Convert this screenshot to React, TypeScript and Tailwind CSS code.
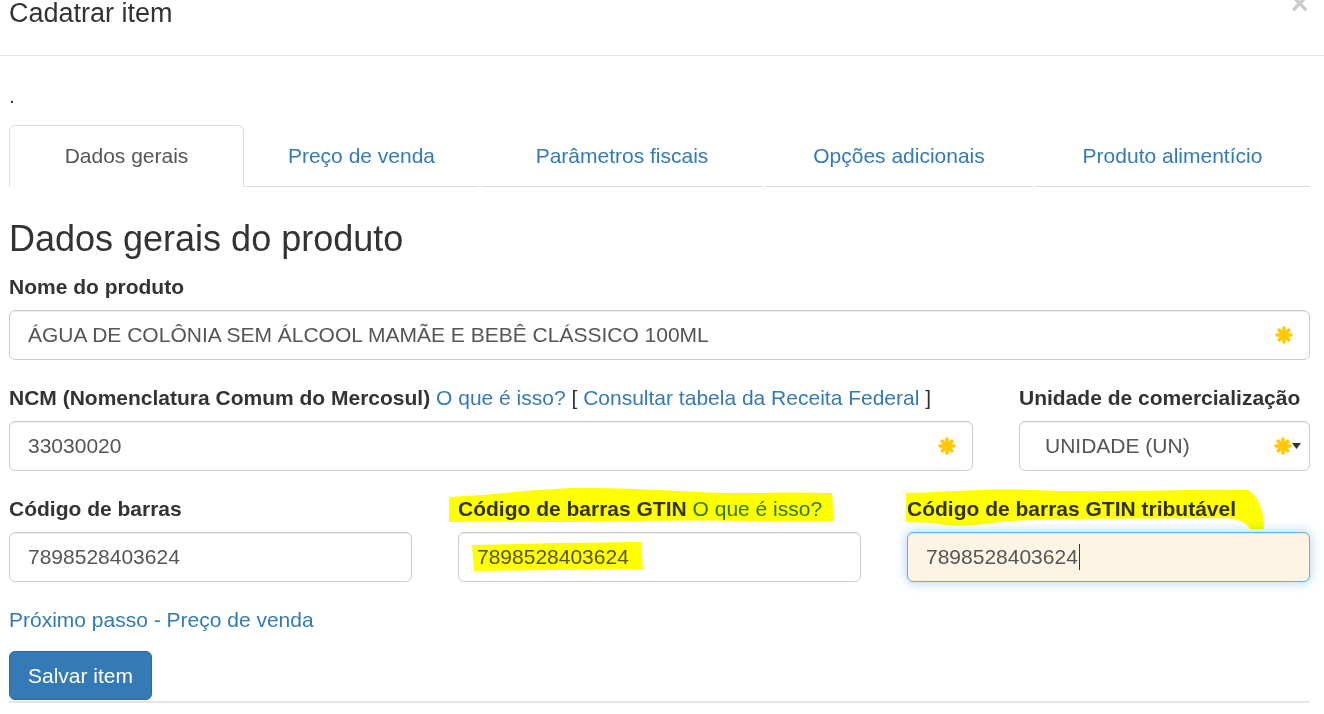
function Asterisk() {
  return (
    <svg width="18" height="18" viewBox="0 0 18 18" className="block">
      <g stroke="#ffc800" strokeWidth="3.6" strokeLinecap="round">
        <line x1="9" y1="2" x2="9" y2="16" />
        <line x1="2" y1="9" x2="16" y2="9" />
        <line x1="4.2" y1="4.2" x2="13.8" y2="13.8" />
        <line x1="13.8" y1="4.2" x2="4.2" y2="13.8" />
      </g>
    </svg>
  )
}

const label = "block font-bold text-[21px] leading-[30px] text-[#333] mb-[8px]"
const fieldBase = "relative flex items-center h-[50px] rounded-[6px] border px-[18px] text-[21px] text-[#555]"
const field = `${fieldBase} border-[#ccc] bg-white shadow-[inset_0_1px_1px_rgba(0,0,0,0.075)]`
const fieldFocus = `${fieldBase} border-[#66afe9] bg-[#fdf5e3] shadow-[inset_0_1px_1px_rgba(0,0,0,0.075),0_0_12px_rgba(102,175,233,0.6)]`

const tabs = [
  { name: "Preço de venda", w: "w-[235px]" },
  { name: "Parâmetros fiscais", w: "w-[282px] ml-[2px]" },
  { name: "Opções adicionais", w: "w-[268px] ml-[2px]" },
  { name: "Produto alimentício", w: "w-[275px] ml-[2px]" },
]

export default function App() {
  return (
    <div className="relative w-[1324px] h-[714px] overflow-hidden bg-white font-['Liberation_Sans',Arial,sans-serif] text-[#333]">
      {/* Header */}
      <div className="flex items-start justify-between h-[56px] border-b border-[#e5e5e5] pl-[9px] pr-[15px]">
        <div className="-mt-[6px] text-[27px] leading-[38.6px] text-[#333]">Cadatrar item</div>
        <div className="-mt-[12px] text-[31.5px] font-bold leading-none text-black opacity-20">×</div>
      </div>

      <div className="pl-[9px] pr-[14px]">
        <p className="mt-[25px] mb-[14px] text-[21px] leading-[30px]">.</p>

        {/* Tabs */}
        <div className="flex text-[21px] leading-[30px]">
          <div className="w-[235px] rounded-t-[6px] border border-[#ddd] border-b-white bg-white py-[15px] text-center text-[#555]">
            Dados gerais
          </div>
          {tabs.map((t) => (
            <div
              key={t.name}
              className={`${t.w} border-b border-[#ddd] pt-[16px] pb-[15px] text-center text-[#337ab7]`}
            >
              {t.name}
            </div>
          ))}
        </div>

        <h3 className="mt-[32px] mb-[13px] text-[36px] leading-[39.6px] text-[#333]">Dados gerais do produto</h3>

        {/* Nome */}
        <div className="mb-[23px]">
          <label className={label}>Nome do produto</label>
          <div className={field}>
            ÁGUA DE COLÔNIA SEM ÁLCOOL MAMÃE E BEBÊ CLÁSSICO 100ML
            <span className="absolute right-[16px] top-1/2 -translate-y-1/2">
              <Asterisk />
            </span>
          </div>
        </div>

        {/* NCM + Unidade */}
        <div className="grid grid-cols-[1fr_291px] gap-x-[46px] mb-[23px]">
          <div>
            <label className={label}>
              NCM (Nomenclatura Comum do Mercosul){" "}
              <span className="font-normal text-[#337ab7]">O que é isso?</span>
              <span className="font-normal"> [ </span>
              <span className="font-normal text-[#337ab7]">Consultar tabela da Receita Federal</span>
              <span className="font-normal"> ]</span>
            </label>
            <div className={field}>
              33030020
              <span className="absolute right-[16px] top-1/2 -translate-y-1/2">
                <Asterisk />
              </span>
            </div>
          </div>
          <div>
            <label className={label}>Unidade de comercialização</label>
            <div className={`${field} pl-[25px]`}>
              UNIDADE (UN)
              <span className="absolute right-[17px] top-1/2 -translate-y-1/2">
                <Asterisk />
              </span>
              <svg width="9" height="6" viewBox="0 0 9 6" className="absolute right-[8px] top-[21px]">
                <path d="M0 0 L9 0 L4.5 6 Z" fill="#333" />
              </svg>
            </div>
          </div>
        </div>

        {/* Codigos de barras */}
        <div className="grid grid-cols-3 gap-x-[46px] mb-[23px]">
          <div>
            <label className={label}>Código de barras</label>
            <div className={field}>7898528403624</div>
          </div>
          <div>
            <label className={label}>
              Código de barras GTIN <span className="font-normal text-[#337ab7]">O que é isso?</span>
            </label>
            <div className={field}>7898528403624</div>
          </div>
          <div>
            <label className={label}>Código de barras GTIN tributável</label>
            <div className={fieldFocus}>
              <span className="border-r border-[#333] pr-[1px] leading-[26px]">7898528403624</span>
            </div>
          </div>
        </div>

        <div className="text-[21px] leading-[30px] text-[#337ab7]">Próximo passo - Preço de venda</div>

        <button className="mt-[16.5px] h-[49px] rounded-[6px] border border-[#2e6da4] bg-[#337ab7] px-[18px] text-[21px] text-white">
          Salvar item
        </button>
        <div className="mt-[1px] h-[2px] bg-[#e5e5e5]" />
      </div>

      {/* marker highlights drawn over the screenshot */}
      <svg
        width="1324"
        height="714"
        viewBox="0 0 1324 714"
        className="pointer-events-none absolute left-0 top-0 mix-blend-multiply"
      >
        <g fill="#ffff00">
          <path d="M449,497 C500,494 540,489 575,488 C640,487 700,494 760,493 C790,492 815,493 832,493 L834,521 C780,523 720,519 640,521 C560,523 500,521 449,522 Z" />
          <path d="M472,545 L560,543 L641,542 L643,569 L560,570 L474,571 Z" />
          <path d="M906,493 C950,492 985,488 1030,490 C1100,493 1180,489 1248,490 C1258,496 1264,510 1264,529 L1250,529 C1246,522 1238,518 1222,518 C1120,519 1040,518 1000,522 C975,526 950,527 935,523 L906,522 Z" />
        </g>
      </svg>
    </div>
  )
}
